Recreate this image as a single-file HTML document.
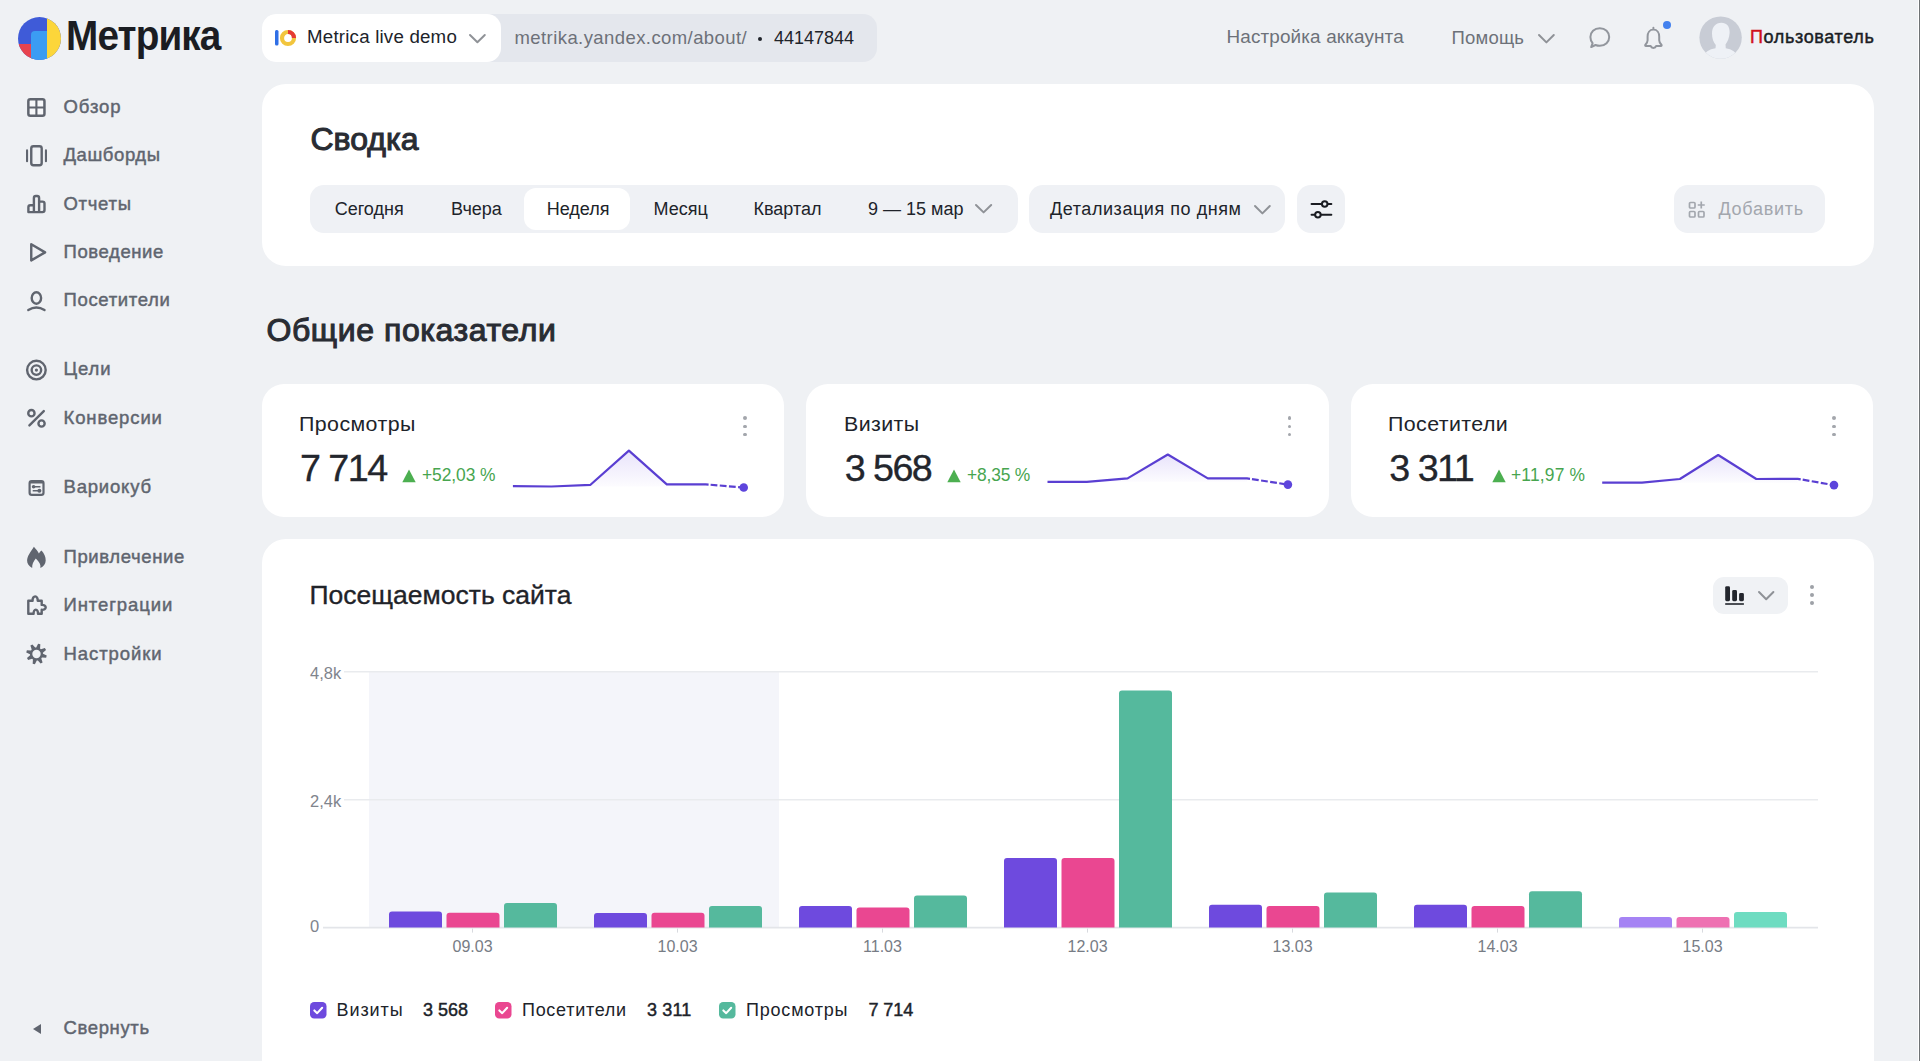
<!DOCTYPE html>
<html><head><meta charset="utf-8"><title>Метрика</title>
<style>
html,body{margin:0;padding:0}
body{width:1920px;height:1061px;background:#eff1f4;position:relative;overflow:hidden;font-family:"Liberation Sans",sans-serif}
.t{position:absolute;white-space:nowrap;line-height:1}
.r{position:absolute}
.a{position:absolute;overflow:visible}
</style></head><body>
<svg class="a" style="left:17px;top:15.5px" width="45" height="45" viewBox="0 0 45 45">
<defs><clipPath id="lc"><circle cx="22.5" cy="22.5" r="21.5"/></clipPath></defs>
<g clip-path="url(#lc)">
<rect x="0" y="0" width="45" height="45" fill="#3f5bd8"/>
<rect x="30" y="0" width="15" height="45" fill="#fcd63a"/>
<rect x="0" y="28" width="16" height="17" fill="#e8434e"/>
<path d="M14 45 V19 Q14 15 18 15 H30 V45 Z" fill="#3b9cf3"/>
</g></svg>
<div class="t" style="left:66px;top:14.19px;font-size:43px;color:#1b1d22;font-weight:700;letter-spacing:-0.95px;transform:scaleX(0.9);transform-origin:0 0">Метрика</div>
<div class="r" style="left:262px;top:14px;width:615px;height:48px;background:#e4e7ed;border-radius:14px;"></div>
<div class="r" style="left:262px;top:14px;width:239px;height:48px;background:#ffffff;border-radius:14px;"></div>
<svg class="a" style="left:273px;top:29px" width="25" height="18" viewBox="0 0 25 18">
<rect x="2" y="1" width="3.5" height="15.5" rx="1.5" fill="#2f6fe6"/>
<circle cx="15" cy="9" r="6" fill="none" stroke="#f2c53d" stroke-width="4.2"/>
<path d="M15 3 A6 6 0 0 1 21 9" fill="none" stroke="#e53a35" stroke-width="4.2"/>
</svg>
<div class="t" style="left:307px;top:28.37px;font-size:18.7px;color:#20232a;font-weight:400;letter-spacing:0.21px;">Metrica live demo</div>
<svg class="a" style="left:466.6px;top:31.8px" width="20.8" height="13.2" viewBox="466.6 31.8 20.8 13.2"><path d="M469.6 34.8 L477 42 L484.4 34.8" fill="none" stroke="#8f9297" stroke-width="2" stroke-linecap="round" stroke-linejoin="round"/></svg>
<div class="t" style="left:514.5px;top:28.54px;font-size:18.5px;color:#6d7179;font-weight:400;letter-spacing:0.42px;">metrika.yandex.com/about/</div>
<div class="r" style="left:757.5px;top:36.5px;width:4px;height:4px;background:#20232a;border-radius:2px;"></div>
<div class="t" style="left:774px;top:28.96px;font-size:18px;color:#20232a;font-weight:400;letter-spacing:0px;">44147844</div>
<div class="t" style="left:1226.5px;top:28.30px;font-size:18.9px;color:#6d7179;font-weight:400;letter-spacing:0.14px;">Настройка аккаунта</div>
<div class="t" style="left:1451.5px;top:28.64px;font-size:18.5px;color:#6d7179;font-weight:400;letter-spacing:0.2px;">Помощь</div>
<svg class="a" style="left:1536.2px;top:31.8px" width="20.8" height="13.4" viewBox="1536.2 31.8 20.8 13.4"><path d="M1539.2 34.8 L1546.6 42.2 L1554 34.8" fill="none" stroke="#8f9297" stroke-width="2" stroke-linecap="round" stroke-linejoin="round"/></svg>
<svg class="a" style="left:0;top:0" width="1920" height="80" viewBox="0 0 1920 80">
<path d="M1599.8 28.2 C1605.3 28.2 1609.2 32 1609.2 37 C1609.2 42 1605.3 45.8 1599.8 45.8 C1598.2 45.8 1596.8 45.5 1595.5 45 L1591.2 47 L1592.6 43.2 C1591.2 41.6 1590.4 39.4 1590.4 37 C1590.4 32 1594.3 28.2 1599.8 28.2 Z" fill="none" stroke="#92969d" stroke-width="2" stroke-linejoin="round"/>
<path d="M1653.4 29.6 C1649.4 29.6 1647.6 33 1647.6 36.5 V40.3 C1647.6 41.9 1646.6 43.4 1645.4 44.7 C1644.9 45.3 1645.2 45.9 1645.9 45.9 H1650.6 C1651.1 47.3 1652.1 47.9 1653.4 47.9 C1654.7 47.9 1655.7 47.3 1656.2 45.9 H1660.9 C1661.6 45.9 1661.9 45.3 1661.4 44.7 C1660.2 43.4 1659.2 41.9 1659.2 40.3 V36.5 C1659.2 33 1657.4 29.6 1653.4 29.6 Z M1653.4 27.7 V29.6" fill="none" stroke="#92969d" stroke-width="2" stroke-linejoin="round" stroke-linecap="round"/>
</svg>
<div class="r" style="left:1662.9px;top:20.6px;width:8px;height:8px;background:#4381ee;border-radius:4px;"></div>
<svg class="a" style="left:0;top:0" width="1920" height="80" viewBox="0 0 1920 80">
<defs><clipPath id="av"><circle cx="1720.6" cy="37.6" r="21.2"/></clipPath></defs>
<g clip-path="url(#av)">
<rect x="1690" y="0" width="60" height="80" fill="#c8ccd5"/>
<path d="M1721.5 22.8 C1727 22.8 1730 27 1729.6 33 C1729.3 38 1727.5 42 1725.5 44.5 L1725.8 48.2 C1732 49.3 1737 52 1739 60 H1702 C1704 52 1709 49.3 1715.5 48.2 L1715.8 45 C1713.5 42.5 1712 38.5 1712 33.5 C1712 27 1715.5 22.8 1721.5 22.8 Z" fill="#eef1f6"/>
</g></svg>
<div class="t" style="left:1750px;top:28.46px;font-size:18px;color:#1a1d24;font-weight:400;letter-spacing:0.64px;-webkit-text-stroke:0.45px #1a1d24;"><span style="color:#d0111b;-webkit-text-stroke:0.45px #d0111b">П</span>ользователь</div>
<div class="r" style="left:1918px;top:0px;width:1px;height:1061px;background:#ffffff;border-radius:0px;"></div>
<div class="r" style="left:1919px;top:0px;width:1px;height:1061px;background:#6f7375;border-radius:0px;"></div>
<div class="t" style="left:63.5px;top:97.84px;font-size:18.5px;color:#60656f;font-weight:400;letter-spacing:0.9px;-webkit-text-stroke:0.45px #60656f;">Обзор</div>
<div class="t" style="left:63.5px;top:146.24px;font-size:18.5px;color:#60656f;font-weight:400;letter-spacing:0.57px;-webkit-text-stroke:0.45px #60656f;">Дашборды</div>
<div class="t" style="left:63.5px;top:194.94px;font-size:18.5px;color:#60656f;font-weight:400;letter-spacing:0.7px;-webkit-text-stroke:0.45px #60656f;">Отчеты</div>
<div class="t" style="left:63.5px;top:243.34px;font-size:18.5px;color:#60656f;font-weight:400;letter-spacing:0.6px;-webkit-text-stroke:0.45px #60656f;">Поведение</div>
<div class="t" style="left:63.5px;top:291.44px;font-size:18.5px;color:#60656f;font-weight:400;letter-spacing:0.67px;-webkit-text-stroke:0.45px #60656f;">Посетители</div>
<div class="t" style="left:63.5px;top:360.44px;font-size:18.5px;color:#60656f;font-weight:400;letter-spacing:0.87px;-webkit-text-stroke:0.45px #60656f;">Цели</div>
<div class="t" style="left:63.5px;top:409.04px;font-size:18.5px;color:#60656f;font-weight:400;letter-spacing:0.88px;-webkit-text-stroke:0.45px #60656f;">Конверсии</div>
<div class="t" style="left:63.5px;top:478.14px;font-size:18.5px;color:#60656f;font-weight:400;letter-spacing:0.8px;-webkit-text-stroke:0.45px #60656f;">Вариокуб</div>
<div class="t" style="left:63.5px;top:548.24px;font-size:18.5px;color:#60656f;font-weight:400;letter-spacing:0.62px;-webkit-text-stroke:0.45px #60656f;">Привлечение</div>
<div class="t" style="left:63.5px;top:596.34px;font-size:18.5px;color:#60656f;font-weight:400;letter-spacing:0.9px;-webkit-text-stroke:0.45px #60656f;">Интеграции</div>
<div class="t" style="left:63.5px;top:644.54px;font-size:18.5px;color:#60656f;font-weight:400;letter-spacing:0.93px;-webkit-text-stroke:0.45px #60656f;">Настройки</div>
<div class="t" style="left:63.5px;top:1019.34px;font-size:18.5px;color:#60656f;font-weight:400;letter-spacing:0.63px;-webkit-text-stroke:0.45px #60656f;">Свернуть</div>
<svg class="a" style="left:31px;top:1022px" width="12" height="14" viewBox="0 0 12 14"><path d="M2 7 L10 2 V12 Z" fill="#60656f"/></svg>
<svg class="a" style="left:0;top:0" width="260" height="700" viewBox="0 0 260 700"><rect x="28.35" y="99.35" width="16.1" height="16.3" rx="2" fill="#f7f8fa" stroke="#60656f" stroke-width="2.5"/><path d="M36.4 99.4 V115.6 M28.4 107.5 H44.4" stroke="#60656f" stroke-width="2.1"/><rect x="31.25" y="146.3" width="10.45" height="18.9" rx="2.2" fill="none" stroke="#60656f" stroke-width="2.4"/><path d="M27.05 150.4 V161.2 M45.95 150.4 V161.2" stroke="#60656f" stroke-width="2.1" stroke-linecap="round"/><path d="M28.4 212.1 V207.3 Q28.4 205.3 30.4 205.3 H33.9 V197.9 Q33.9 196 35.9 196 H37.1 Q39.1 196 39.1 197.9 V201.6 H42.5 Q44.5 201.6 44.5 203.6 V210.1 Q44.5 212.1 42.5 212.1 Z M33.9 205.3 V212.1 M39.1 201.6 V212.1" fill="none" stroke="#60656f" stroke-width="2.4" stroke-linejoin="round" stroke-linecap="round"/><path d="M31.25 244.3 L45.1 252.35 L31.25 260.4 Z" fill="none" stroke="#60656f" stroke-width="2.4" stroke-linejoin="round" stroke-linecap="round"/><ellipse cx="36.4" cy="298" rx="4.7" ry="5.7" fill="none" stroke="#60656f" stroke-width="2.4" stroke-linejoin="round" stroke-linecap="round"/><path d="M28.3 310 Q36.4 305 44.5 310" fill="none" stroke="#60656f" stroke-width="2.4" stroke-linejoin="round" stroke-linecap="round"/><circle cx="36.4" cy="370.1" r="9.3" fill="none" stroke="#60656f" stroke-width="2.4" stroke-linejoin="round" stroke-linecap="round"/><circle cx="36.4" cy="370.1" r="4.75" fill="none" stroke="#60656f" stroke-width="2.4" stroke-linejoin="round" stroke-linecap="round"/><circle cx="36.4" cy="370.1" r="1.6" fill="#60656f"/><circle cx="31.4" cy="413.2" r="3.15" fill="none" stroke="#60656f" stroke-width="2.4" stroke-linejoin="round" stroke-linecap="round"/><circle cx="41.55" cy="423.5" r="3.1" fill="none" stroke="#60656f" stroke-width="2.4" stroke-linejoin="round" stroke-linecap="round"/><path d="M29.4 425.4 L43.8 411.1" fill="none" stroke="#60656f" stroke-width="2.4" stroke-linejoin="round" stroke-linecap="round"/><rect x="29.6" y="481" width="13.9" height="13.9" rx="2.2" fill="none" stroke="#60656f" stroke-width="2.2"/><path d="M29.6 482.2 H43.5" stroke="#60656f" stroke-width="2.6"/><circle cx="33.6" cy="486.7" r="1.8" fill="#60656f"/><path d="M33.6 486.7 H40.4 M32.7 490.7 H39.4" stroke="#60656f" stroke-width="1.5"/><circle cx="39.4" cy="490.7" r="2" fill="#60656f"/><path d="M32.2 568 C29 566.5 27 563.5 27.1 560.5 C27.2 556 30.5 552 33.9 546.7 C35.8 549 37.8 551 38.9 553.4 C39.6 552.3 40.5 551.3 41.5 550.6 C44.2 553.5 45.8 557 45.7 560.5 C45.6 564 43.5 566.7 40.4 568 C41 565 39.3 561.8 35.8 558.6 C33.4 561.6 31.9 564.6 32.2 568 Z" fill="#60656f"/><path d="M28.3 613.8 V600.7 H32.6 C32.4 598 33.8 596.4 35.2 596.4 C36.6 596.4 37.9 598 37.7 600.7 H41.7 V604.9 C44 604.7 45.7 605.8 45.7 607.35 C45.7 608.9 44 610 41.7 609.8 V613.8 H38 C38.1 611.2 37.1 609.6 35.8 609.6 C34.5 609.6 33.5 611.2 33.6 613.8 Z" fill="none" stroke="#60656f" stroke-width="2.4" stroke-linejoin="round" stroke-linecap="round"/><path d="M36.21 647.49 L38.11 643.76 L40.33 644.37 L40.07 648.55 L40.89 649.19 L44.88 647.90 L46.02 649.90 L42.88 652.67 L43.01 653.71 L46.74 655.61 L46.13 657.83 L41.95 657.57 L41.31 658.39 L42.60 662.38 L40.60 663.52 L37.83 660.38 L36.79 660.51 L34.89 664.24 L32.67 663.63 L32.93 659.45 L32.11 658.81 L28.12 660.10 L26.98 658.10 L30.12 655.33 L29.99 654.29 L26.26 652.39 L26.87 650.17 L31.05 650.43 L31.69 649.61 L30.40 645.62 L32.40 644.48 L35.17 647.62 Z M40.7 654.0 A4.2 4.2 0 1 0 32.3 654.0 A4.2 4.2 0 1 0 40.7 654.0 Z" fill="#60656f" fill-rule="evenodd"/></svg>
<div class="r" style="left:261.5px;top:84px;width:1612px;height:182px;background:#ffffff;border-radius:24px;"></div>
<div class="t" style="left:310.5px;top:122.91px;font-size:32px;color:#292c33;font-weight:400;letter-spacing:0.0px;-webkit-text-stroke:1.05px #292c33;">Сводка</div>
<div class="r" style="left:310px;top:185px;width:708px;height:48px;background:#eff1f5;border-radius:14px;"></div>
<div class="r" style="left:524px;top:188px;width:106px;height:42px;background:#ffffff;border-radius:12px;"></div>
<div class="t" style="left:334.7px;top:200.06px;font-size:18px;color:#20232a;font-weight:400;letter-spacing:0px;">Сегодня</div>
<div class="t" style="left:451px;top:200.06px;font-size:18px;color:#20232a;font-weight:400;letter-spacing:0px;">Вчера</div>
<div class="t" style="left:546.7px;top:200.06px;font-size:18px;color:#20232a;font-weight:400;letter-spacing:0px;">Неделя</div>
<div class="t" style="left:653.5px;top:200.06px;font-size:18px;color:#20232a;font-weight:400;letter-spacing:0px;">Месяц</div>
<div class="t" style="left:753.5px;top:200.06px;font-size:18px;color:#20232a;font-weight:400;letter-spacing:0px;">Квартал</div>
<div class="t" style="left:868px;top:200.06px;font-size:18px;color:#20232a;font-weight:400;letter-spacing:0px;">9 — 15 мар</div>
<svg class="a" style="left:972.6px;top:202.4px" width="21.2" height="13.4" viewBox="972.6 202.4 21.2 13.4"><path d="M975.6 205.4 L983.2 212.8 L990.8 205.4" fill="none" stroke="#8f9297" stroke-width="2" stroke-linecap="round" stroke-linejoin="round"/></svg>
<div class="r" style="left:1029px;top:185px;width:256px;height:48px;background:#eff1f5;border-radius:14px;"></div>
<div class="t" style="left:1050px;top:200.06px;font-size:18px;color:#20232a;font-weight:400;letter-spacing:0.56px;">Детализация по дням</div>
<svg class="a" style="left:1252.0px;top:202.8px" width="20.8" height="13.4" viewBox="1252.0 202.8 20.8 13.4"><path d="M1255 205.8 L1262.4 213.2 L1269.8 205.8" fill="none" stroke="#8f9297" stroke-width="2" stroke-linecap="round" stroke-linejoin="round"/></svg>
<div class="r" style="left:1297px;top:185px;width:48px;height:48px;background:#eff1f5;border-radius:14px;"></div>
<svg class="a" style="left:1309px;top:197px" width="24" height="24" viewBox="0 0 24 24">
<path d="M2.6 7 H22.3 M2.6 17.7 H22.3" stroke="#1a1c22" stroke-width="2.1" stroke-linecap="round"/>
<circle cx="15.7" cy="7" r="2.75" fill="#eff1f5" stroke="#1a1c22" stroke-width="2"/>
<circle cx="8.9" cy="17.7" r="2.75" fill="#eff1f5" stroke="#1a1c22" stroke-width="2"/>
</svg>
<div class="r" style="left:1674px;top:185px;width:151px;height:48px;background:#eff1f5;border-radius:14px;"></div>
<svg class="a" style="left:1687px;top:200px" width="20" height="20" viewBox="0 0 20 20">
<rect x="2.5" y="2.5" width="5.5" height="5.5" rx="1" fill="none" stroke="#a3a7ae" stroke-width="1.7"/>
<rect x="2.5" y="11.5" width="5.5" height="5.5" rx="1" fill="none" stroke="#a3a7ae" stroke-width="1.7"/>
<rect x="11.5" y="11.5" width="5.5" height="5.5" rx="1" fill="none" stroke="#a3a7ae" stroke-width="1.7"/>
<path d="M14.25 1.5 V8.5 M10.75 5 H17.75" stroke="#a3a7ae" stroke-width="1.7"/>
</svg>
<div class="t" style="left:1718.5px;top:200.06px;font-size:18px;color:#a3a7ae;font-weight:400;letter-spacing:0.71px;">Добавить</div>
<div class="t" style="left:266.5px;top:313.51px;font-size:32px;color:#292c33;font-weight:400;letter-spacing:0.57px;-webkit-text-stroke:1.05px #292c33;">Общие показатели</div>
<div class="r" style="left:261.5px;top:384px;width:522.7px;height:133px;background:#ffffff;border-radius:22px;"></div>
<div class="t" style="left:299.0px;top:414.07px;font-size:20px;color:#20232a;font-weight:400;letter-spacing:0.4px;transform:scaleX(1.068);transform-origin:0 0">Просмотры</div>
<div class="t" style="left:300.0px;top:450.08px;font-size:37.7px;color:#23262d;font-weight:400;letter-spacing:-1.55px;-webkit-text-stroke:0.35px #23262d;">7 714</div>

<div class="r" style="left:742.8000000000001px;top:416.1px;width:3.8px;height:3.8px;background:#a3a6ac;border-radius:2px;"></div>
<div class="r" style="left:742.8000000000001px;top:424.5px;width:3.8px;height:3.8px;background:#a3a6ac;border-radius:2px;"></div>
<div class="r" style="left:742.8000000000001px;top:432.70000000000005px;width:3.8px;height:3.8px;background:#a3a6ac;border-radius:2px;"></div>
<svg class="a" style="left:0;top:0" width="1920" height="600" viewBox="0 0 1920 600">
<defs><linearGradient id="sg0" x1="0" y1="0" x2="0" y2="1"><stop offset="0" stop-color="#7a5ce6" stop-opacity="0.17"/><stop offset="1" stop-color="#7a5ce6" stop-opacity="0.02"/></linearGradient></defs>
<polygon points="512.9,486.2 551.5,486.5 590.5,484.8 628.9,450.6 666.8,484.4 705.6,484.4 705.6,486.5 512.9,486.5" fill="url(#sg0)"/>
<polyline points="512.9,486.2 551.5,486.5 590.5,484.8 628.9,450.6 666.8,484.4 705.6,484.4 708.6,484.6" fill="none" stroke="#5a3fd2" stroke-width="2.2" stroke-linejoin="round"/>
<polyline points="708.6,484.6 743.7,487.5" fill="none" stroke="#5a3fd2" stroke-width="2.2" stroke-dasharray="6.8 2.4" stroke-dashoffset="7.2"/>
<circle cx="743.7" cy="487.5" r="4.3" fill="#5d45dc"/>
</svg>
<div class="r" style="left:806.2px;top:384px;width:522.7px;height:133px;background:#ffffff;border-radius:22px;"></div>
<div class="t" style="left:843.7px;top:414.07px;font-size:20px;color:#20232a;font-weight:400;letter-spacing:0.4px;transform:scaleX(1.068);transform-origin:0 0">Визиты</div>
<div class="t" style="left:844.7px;top:450.08px;font-size:37.7px;color:#23262d;font-weight:400;letter-spacing:-1.55px;-webkit-text-stroke:0.35px #23262d;">3 568</div>

<div class="r" style="left:1287.5px;top:416.1px;width:3.8px;height:3.8px;background:#a3a6ac;border-radius:2px;"></div>
<div class="r" style="left:1287.5px;top:424.5px;width:3.8px;height:3.8px;background:#a3a6ac;border-radius:2px;"></div>
<div class="r" style="left:1287.5px;top:432.70000000000005px;width:3.8px;height:3.8px;background:#a3a6ac;border-radius:2px;"></div>
<svg class="a" style="left:0;top:0" width="1920" height="600" viewBox="0 0 1920 600">
<defs><linearGradient id="sg1" x1="0" y1="0" x2="0" y2="1"><stop offset="0" stop-color="#7a5ce6" stop-opacity="0.17"/><stop offset="1" stop-color="#7a5ce6" stop-opacity="0.02"/></linearGradient></defs>
<polygon points="1047.5,481.8 1086.8,481.8 1127.6,478.4 1167.8,454.5 1207.8,478.4 1247.0,478.4 1247.0,481.8 1047.5,481.8" fill="url(#sg1)"/>
<polyline points="1047.5,481.8 1086.8,481.8 1127.6,478.4 1167.8,454.5 1207.8,478.4 1247.0,478.4 1250.0,478.8" fill="none" stroke="#5a3fd2" stroke-width="2.2" stroke-linejoin="round"/>
<polyline points="1250.0,478.8 1287.9,484.6" fill="none" stroke="#5a3fd2" stroke-width="2.2" stroke-dasharray="6.8 2.4" stroke-dashoffset="7.2"/>
<circle cx="1287.9" cy="484.6" r="4.3" fill="#5d45dc"/>
</svg>
<div class="r" style="left:1350.8px;top:384px;width:522.7px;height:133px;background:#ffffff;border-radius:22px;"></div>
<div class="t" style="left:1388.3px;top:414.07px;font-size:20px;color:#20232a;font-weight:400;letter-spacing:0.4px;transform:scaleX(1.068);transform-origin:0 0">Посетители</div>
<div class="t" style="left:1389.3px;top:450.08px;font-size:37.7px;color:#23262d;font-weight:400;letter-spacing:-1.55px;-webkit-text-stroke:0.35px #23262d;">3 311</div>

<div class="r" style="left:1832.1px;top:416.1px;width:3.8px;height:3.8px;background:#a3a6ac;border-radius:2px;"></div>
<div class="r" style="left:1832.1px;top:424.5px;width:3.8px;height:3.8px;background:#a3a6ac;border-radius:2px;"></div>
<div class="r" style="left:1832.1px;top:432.70000000000005px;width:3.8px;height:3.8px;background:#a3a6ac;border-radius:2px;"></div>
<svg class="a" style="left:0;top:0" width="1920" height="600" viewBox="0 0 1920 600">
<defs><linearGradient id="sg2" x1="0" y1="0" x2="0" y2="1"><stop offset="0" stop-color="#7a5ce6" stop-opacity="0.17"/><stop offset="1" stop-color="#7a5ce6" stop-opacity="0.02"/></linearGradient></defs>
<polygon points="1602.2,482.7 1642.0,482.7 1679.9,479.0 1718.2,455.0 1756.3,479.0 1797.7,478.8 1797.7,482.7 1602.2,482.7" fill="url(#sg2)"/>
<polyline points="1602.2,482.7 1642.0,482.7 1679.9,479.0 1718.2,455.0 1756.3,479.0 1797.7,478.8 1800.7,479.3" fill="none" stroke="#5a3fd2" stroke-width="2.2" stroke-linejoin="round"/>
<polyline points="1800.7,479.3 1834.0,485.1" fill="none" stroke="#5a3fd2" stroke-width="2.2" stroke-dasharray="6.8 2.4" stroke-dashoffset="7.2"/>
<circle cx="1834" cy="485.1" r="4.3" fill="#5d45dc"/>
</svg>
<svg class="a" style="left:402.3px;top:469px" width="14" height="14" viewBox="0 0 14 14"><path d="M7 0.5 L13.7 13.2 H0.3 Z" fill="#4caf50"/></svg>
<div class="t" style="left:422.2px;top:466.14px;font-size:18.5px;color:#47a54f;font-weight:400;letter-spacing:-0.06px;transform:scaleX(0.94);transform-origin:0 0">+52,03 %</div>
<svg class="a" style="left:946.8px;top:469px" width="14" height="14" viewBox="0 0 14 14"><path d="M7 0.5 L13.7 13.2 H0.3 Z" fill="#4caf50"/></svg>
<div class="t" style="left:966.5px;top:466.14px;font-size:18.5px;color:#47a54f;font-weight:400;letter-spacing:-0.17px;transform:scaleX(0.94);transform-origin:0 0">+8,35 %</div>
<svg class="a" style="left:1491.7px;top:469px" width="14" height="14" viewBox="0 0 14 14"><path d="M7 0.5 L13.7 13.2 H0.3 Z" fill="#4caf50"/></svg>
<div class="t" style="left:1510.8px;top:466.14px;font-size:18.5px;color:#47a54f;font-weight:400;letter-spacing:0.2px;transform:scaleX(0.94);transform-origin:0 0">+11,97 %</div>
<div class="r" style="left:261.5px;top:538.5px;width:1612px;height:600px;background:#ffffff;border-radius:24px;"></div>
<div class="t" style="left:309.5px;top:581.56px;font-size:26.5px;color:#1f2329;font-weight:400;letter-spacing:0.0px;-webkit-text-stroke:0.35px #1f2329;">Посещаемость сайта</div>
<div class="r" style="left:1713px;top:577px;width:75px;height:37px;background:#f0f2f5;border-radius:11px;"></div>
<svg class="a" style="left:1724px;top:585px" width="21" height="21" viewBox="0 0 21 21">
<rect x="1.2" y="1.2" width="4.8" height="15" rx="1.4" fill="#23262d"/>
<rect x="8.2" y="5" width="4.8" height="11.2" rx="1.4" fill="#23262d"/>
<rect x="15.1" y="8" width="4.8" height="8.2" rx="1.4" fill="#23262d"/>
<rect x="1.2" y="18.2" width="18.7" height="1.6" fill="#23262d"/>
</svg>
<svg class="a" style="left:1756.2px;top:588.6px" width="20.4" height="13.2" viewBox="1756.2 588.6 20.4 13.2"><path d="M1759.2 591.6 L1766.4 598.8 L1773.6 591.6" fill="none" stroke="#8f9297" stroke-width="2" stroke-linecap="round" stroke-linejoin="round"/></svg>
<div class="r" style="left:1810.1px;top:585.1px;width:3.8px;height:3.8px;background:#9ea1a7;border-radius:2px;"></div>
<div class="r" style="left:1810.1px;top:593.4px;width:3.8px;height:3.8px;background:#9ea1a7;border-radius:2px;"></div>
<div class="r" style="left:1810.1px;top:601.4px;width:3.8px;height:3.8px;background:#9ea1a7;border-radius:2px;"></div>
<svg class="a" style="left:0;top:0" width="1920" height="1061" viewBox="0 0 1920 1061"><rect x="369" y="672" width="410" height="255.6" fill="#f4f5fa"/><line x1="344" y1="671.7" x2="1818" y2="671.7" stroke="#e9ebee" stroke-width="1.6"/><line x1="344" y1="799.7" x2="1818" y2="799.7" stroke="#e9ebee" stroke-width="1.6"/><line x1="323" y1="927.6" x2="1818" y2="927.6" stroke="#e3e5e9" stroke-width="1.6"/><path d="M389.0 927.6 V914.4 Q389.0 911.4 392.0 911.4 H439.0 Q442.0 911.4 442.0 914.4 V927.6 Z" fill="#6e4ade"/><path d="M446.5 927.6 V915.8 Q446.5 912.8 449.5 912.8 H496.5 Q499.5 912.8 499.5 915.8 V927.6 Z" fill="#ea4791"/><path d="M504.0 927.6 V906.0 Q504.0 903.0 507.0 903.0 H554.0 Q557.0 903.0 557.0 906.0 V927.6 Z" fill="#55b99d"/><line x1="472.5" y1="928.6" x2="472.5" y2="932.6" stroke="#d8dadf" stroke-width="1"/><path d="M594.0 927.6 V916.1 Q594.0 913.1 597.0 913.1 H644.0 Q647.0 913.1 647.0 916.1 V927.6 Z" fill="#6e4ade"/><path d="M651.5 927.6 V915.7 Q651.5 912.7 654.5 912.7 H701.5 Q704.5 912.7 704.5 915.7 V927.6 Z" fill="#ea4791"/><path d="M709.0 927.6 V909.0 Q709.0 906.0 712.0 906.0 H759.0 Q762.0 906.0 762.0 909.0 V927.6 Z" fill="#55b99d"/><line x1="677.5" y1="928.6" x2="677.5" y2="932.6" stroke="#d8dadf" stroke-width="1"/><path d="M799.0 927.6 V909.0 Q799.0 906.0 802.0 906.0 H849.0 Q852.0 906.0 852.0 909.0 V927.6 Z" fill="#6e4ade"/><path d="M856.5 927.6 V910.5 Q856.5 907.5 859.5 907.5 H906.5 Q909.5 907.5 909.5 910.5 V927.6 Z" fill="#ea4791"/><path d="M914.0 927.6 V898.4 Q914.0 895.4 917.0 895.4 H964.0 Q967.0 895.4 967.0 898.4 V927.6 Z" fill="#55b99d"/><line x1="882.5" y1="928.6" x2="882.5" y2="932.6" stroke="#d8dadf" stroke-width="1"/><path d="M1004.0 927.6 V861.0 Q1004.0 858.0 1007.0 858.0 H1054.0 Q1057.0 858.0 1057.0 861.0 V927.6 Z" fill="#6e4ade"/><path d="M1061.5 927.6 V861.0 Q1061.5 858.0 1064.5 858.0 H1111.5 Q1114.5 858.0 1114.5 861.0 V927.6 Z" fill="#ea4791"/><path d="M1119.0 927.6 V693.5 Q1119.0 690.5 1122.0 690.5 H1169.0 Q1172.0 690.5 1172.0 693.5 V927.6 Z" fill="#55b99d"/><line x1="1087.5" y1="928.6" x2="1087.5" y2="932.6" stroke="#d8dadf" stroke-width="1"/><path d="M1209.0 927.6 V907.8 Q1209.0 904.8 1212.0 904.8 H1259.0 Q1262.0 904.8 1262.0 907.8 V927.6 Z" fill="#6e4ade"/><path d="M1266.5 927.6 V909.0 Q1266.5 906.0 1269.5 906.0 H1316.5 Q1319.5 906.0 1319.5 909.0 V927.6 Z" fill="#ea4791"/><path d="M1324.0 927.6 V895.5 Q1324.0 892.5 1327.0 892.5 H1374.0 Q1377.0 892.5 1377.0 895.5 V927.6 Z" fill="#55b99d"/><line x1="1292.5" y1="928.6" x2="1292.5" y2="932.6" stroke="#d8dadf" stroke-width="1"/><path d="M1414.0 927.6 V907.8 Q1414.0 904.8 1417.0 904.8 H1464.0 Q1467.0 904.8 1467.0 907.8 V927.6 Z" fill="#6e4ade"/><path d="M1471.5 927.6 V909.0 Q1471.5 906.0 1474.5 906.0 H1521.5 Q1524.5 906.0 1524.5 909.0 V927.6 Z" fill="#ea4791"/><path d="M1529.0 927.6 V894.2 Q1529.0 891.2 1532.0 891.2 H1579.0 Q1582.0 891.2 1582.0 894.2 V927.6 Z" fill="#55b99d"/><line x1="1497.5" y1="928.6" x2="1497.5" y2="932.6" stroke="#d8dadf" stroke-width="1"/><path d="M1619.0 927.6 V920.0 Q1619.0 917.0 1622.0 917.0 H1669.0 Q1672.0 917.0 1672.0 920.0 V927.6 Z" fill="#a583f4"/><path d="M1676.5 927.6 V920.0 Q1676.5 917.0 1679.5 917.0 H1726.5 Q1729.5 917.0 1729.5 920.0 V927.6 Z" fill="#ee71b2"/><path d="M1734.0 927.6 V915.0 Q1734.0 912.0 1737.0 912.0 H1784.0 Q1787.0 912.0 1787.0 915.0 V927.6 Z" fill="#6edcc1"/><line x1="1702.5" y1="928.6" x2="1702.5" y2="932.6" stroke="#d8dadf" stroke-width="1"/></svg>
<div class="t" style="left:310px;top:664.63px;font-size:16.5px;color:#7f848d;font-weight:400;letter-spacing:0px;">4,8k</div>
<div class="t" style="left:310px;top:792.53px;font-size:16.5px;color:#7f848d;font-weight:400;letter-spacing:0px;">2,4k</div>
<div class="t" style="left:310px;top:918.23px;font-size:16.5px;color:#7f848d;font-weight:400;letter-spacing:0px;">0</div>
<div class="t" style="left:452.5px;top:939.45px;font-size:16px;color:#777c85;font-weight:400;letter-spacing:0px;width:40px;text-align:center">09.03</div>
<div class="t" style="left:657.5px;top:939.45px;font-size:16px;color:#777c85;font-weight:400;letter-spacing:0px;width:40px;text-align:center">10.03</div>
<div class="t" style="left:862.5px;top:939.45px;font-size:16px;color:#777c85;font-weight:400;letter-spacing:0px;width:40px;text-align:center">11.03</div>
<div class="t" style="left:1067.5px;top:939.45px;font-size:16px;color:#777c85;font-weight:400;letter-spacing:0px;width:40px;text-align:center">12.03</div>
<div class="t" style="left:1272.5px;top:939.45px;font-size:16px;color:#777c85;font-weight:400;letter-spacing:0px;width:40px;text-align:center">13.03</div>
<div class="t" style="left:1477.5px;top:939.45px;font-size:16px;color:#777c85;font-weight:400;letter-spacing:0px;width:40px;text-align:center">14.03</div>
<div class="t" style="left:1682.5px;top:939.45px;font-size:16px;color:#777c85;font-weight:400;letter-spacing:0px;width:40px;text-align:center">15.03</div>
<svg class="a" style="left:309.7px;top:1002px" width="16.5" height="16.5" viewBox="0 0 16 16"><rect x="0" y="0" width="16" height="16" rx="4" fill="#6e4ade"/><path d="M4.2 8.2 L7 10.8 L11.8 5.6" fill="none" stroke="#fff" stroke-width="2" stroke-linecap="round" stroke-linejoin="round"/></svg>
<div class="t" style="left:336.5px;top:1000.96px;font-size:18px;color:#20232a;font-weight:400;letter-spacing:0.92px;">Визиты</div>
<div class="t" style="left:423px;top:1000.96px;font-size:18px;color:#20232a;font-weight:400;letter-spacing:0.0px;-webkit-text-stroke:0.45px #20232a;">3 568</div>
<svg class="a" style="left:495.3px;top:1002px" width="16.5" height="16.5" viewBox="0 0 16 16"><rect x="0" y="0" width="16" height="16" rx="4" fill="#ea4791"/><path d="M4.2 8.2 L7 10.8 L11.8 5.6" fill="none" stroke="#fff" stroke-width="2" stroke-linecap="round" stroke-linejoin="round"/></svg>
<div class="t" style="left:522px;top:1000.96px;font-size:18px;color:#20232a;font-weight:400;letter-spacing:0.71px;">Посетители</div>
<div class="t" style="left:647px;top:1000.96px;font-size:18px;color:#20232a;font-weight:400;letter-spacing:0.15px;-webkit-text-stroke:0.45px #20232a;">3 311</div>
<svg class="a" style="left:719.3px;top:1002px" width="16.5" height="16.5" viewBox="0 0 16 16"><rect x="0" y="0" width="16" height="16" rx="4" fill="#55b99d"/><path d="M4.2 8.2 L7 10.8 L11.8 5.6" fill="none" stroke="#fff" stroke-width="2" stroke-linecap="round" stroke-linejoin="round"/></svg>
<div class="t" style="left:746px;top:1000.96px;font-size:18px;color:#20232a;font-weight:400;letter-spacing:0.8px;">Просмотры</div>
<div class="t" style="left:868.5px;top:1000.96px;font-size:18px;color:#20232a;font-weight:400;letter-spacing:-0.1px;-webkit-text-stroke:0.45px #20232a;">7 714</div>
</body></html>
